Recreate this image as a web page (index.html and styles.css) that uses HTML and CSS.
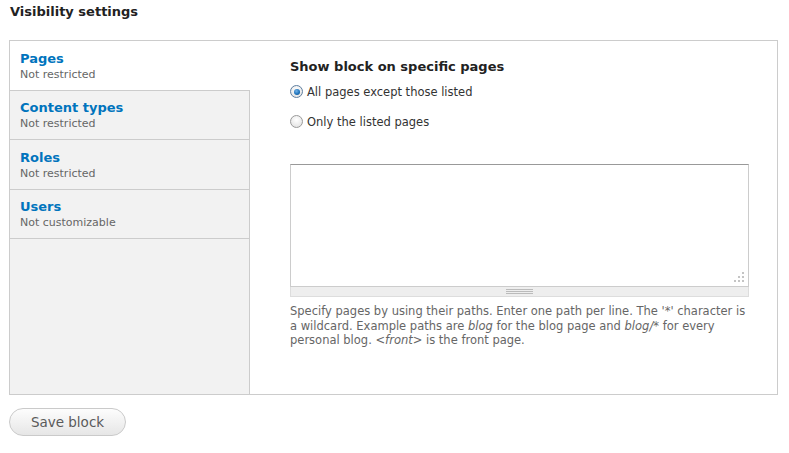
FILE: index.html
```html
<!DOCTYPE html>
<html>
<head>
<meta charset="utf-8">
<link rel="stylesheet" href="styles.css">
</head>
<body>
<div class="page">
  <h2 class="section-title">Visibility settings</h2>
  <div class="vtabs">
    <ul class="vtabs-list">
      <li class="vtab is-selected"><a class="vtab-title">Pages</a><span class="vtab-summary">Not restricted</span></li>
      <li class="vtab"><a class="vtab-title">Content types</a><span class="vtab-summary">Not restricted</span></li>
      <li class="vtab"><a class="vtab-title">Roles</a><span class="vtab-summary">Not restricted</span></li>
      <li class="vtab"><a class="vtab-title">Users</a><span class="vtab-summary">Not customizable</span></li>
    </ul>
    <div class="vtabs-pane">
      <h3 class="pane-title">Show block on specific pages</h3>
      <label class="radio-row"><span class="radio is-checked"></span>All pages except those listed</label>
      <label class="radio-row second"><span class="radio"></span>Only the listed pages</label>
      <div class="textarea-wrap">
        <div class="textarea"><span class="resizer"></span></div>
        <div class="grippie"><span class="grip-lines"></span></div>
      </div>
      <p class="description">Specify pages by using their paths. Enter one path per line. The '*' character is a wildcard. Example paths are <em>blog</em> for the blog page and <em>blog/*</em> for every personal blog. <em>&lt;front&gt;</em> is the front page.</p>
    </div>
  </div>
  <button class="btn">Save block</button>
</div>
</body>
</html>
```

FILE: styles.css
```css
html, body {
  margin: 0;
  padding: 0;
  background: #fff;
}
body {
  font-family: "DejaVu Sans", Verdana, sans-serif;
  color: #333;
}
.page {
  padding: 0 11px 0 9px;
}
.section-title {
  margin: 0;
  padding-top: 2.5px;
  padding-left: 1px;
  font-size: 13px;
  line-height: 18px;
  font-weight: bold;
  color: #222;
  margin-bottom: 19.5px;
}
.vtabs {
  display: flex;
  width: 769px;
  height: 355px;
  box-sizing: border-box;
  border: 1px solid #ccc;
}
.vtabs-list {
  list-style: none;
  margin: 0;
  padding: 0;
  width: 240px;
  box-sizing: border-box;
  background: #f2f2f2;
  border-right: 1px solid #ccc;
  flex: none;
}
.vtab {
  display: flex;
  flex-direction: column;
  padding: 8.5px 10px 8px;
  border-bottom: 1px solid #ccc;
}
.vtab.is-selected {
  background: #fff;
  margin-right: -1px;
}
.vtab-title {
  font-size: 13px;
  line-height: 18px;
  font-weight: bold;
  color: #0074bd;
}
.vtab-summary {
  font-size: 11px;
  line-height: 14px;
  color: #666;
}
.vtabs-pane {
  flex: 1;
  padding: 16.5px 28px 0 40px;
}
.pane-title {
  margin: 0 0 7px;
  font-size: 13px;
  line-height: 18px;
  font-weight: bold;
  color: #222;
}
.radio-row {
  display: flex;
  align-items: center;
  font-size: 11.5px;
  line-height: 18px;
  color: #333;
}
.radio-row.second {
  margin-top: 12px;
}
.radio {
  width: 11px;
  height: 11px;
  border-radius: 50%;
  border: 1px solid #9a9a9a;
  background: radial-gradient(circle at 50% 35%, #fff 0, #e4e4e4 80%);
  margin: 0 4px 0 0;
  flex: none;
  position: relative;
}
.radio.is-checked {
  border-color: #5e7ea0;
}
.radio.is-checked::after {
  content: "";
  position: absolute;
  left: 2.5px;
  top: 2.5px;
  width: 6px;
  height: 6px;
  border-radius: 50%;
  background: radial-gradient(circle at 40% 35%, #6fb1e8 0, #1a6fb8 60%, #0e4a80 100%);
}
.textarea-wrap {
  margin-top: 33.5px;
  width: 459px;
}
.textarea {
  position: relative;
  height: 123px;
  box-sizing: border-box;
  border: 1px solid #ccc;
  border-top-color: #999;
  background: #fff;
}
.resizer {
  position: absolute;
  right: 4px;
  bottom: 4px;
  width: 10px;
  height: 10px;
  background:
    linear-gradient(#c4c4c4, #c4c4c4) 8px 0 / 2px 2px no-repeat,
    linear-gradient(#c4c4c4, #c4c4c4) 4px 4px / 2px 2px no-repeat,
    linear-gradient(#c4c4c4, #c4c4c4) 8px 4px / 2px 2px no-repeat,
    linear-gradient(#c4c4c4, #c4c4c4) 0 8px / 2px 2px no-repeat,
    linear-gradient(#c4c4c4, #c4c4c4) 4px 8px / 2px 2px no-repeat,
    linear-gradient(#c4c4c4, #c4c4c4) 8px 8px / 2px 2px no-repeat;
}
.grippie {
  height: 10px;
  box-sizing: border-box;
  background: #eee;
  border: 1px solid #ddd;
  border-top: 0;
  display: flex;
  justify-content: center;
  align-items: center;
}
.grip-lines {
  width: 27px;
  height: 5px;
  background: repeating-linear-gradient(#bbb 0 1px, transparent 1px 2px);
  margin-top: -1px;
}
.description {
  margin: 7px 0 0;
  width: 459px;
  font-size: 11.5px;
  line-height: 14.5px;
  color: #666;
}
.btn {
  display: block;
  margin-top: 13px;
  width: 117px;
  height: 28px;
  box-sizing: border-box;
  border: 1px solid #cacaca;
  border-radius: 14px;
  background: linear-gradient(#fdfdfd, #e6e6e6);
  font-family: "DejaVu Sans", Verdana, sans-serif;
  font-size: 13.5px;
  color: #5a5a5a;
  padding: 0;
  text-align: center;
}
```
